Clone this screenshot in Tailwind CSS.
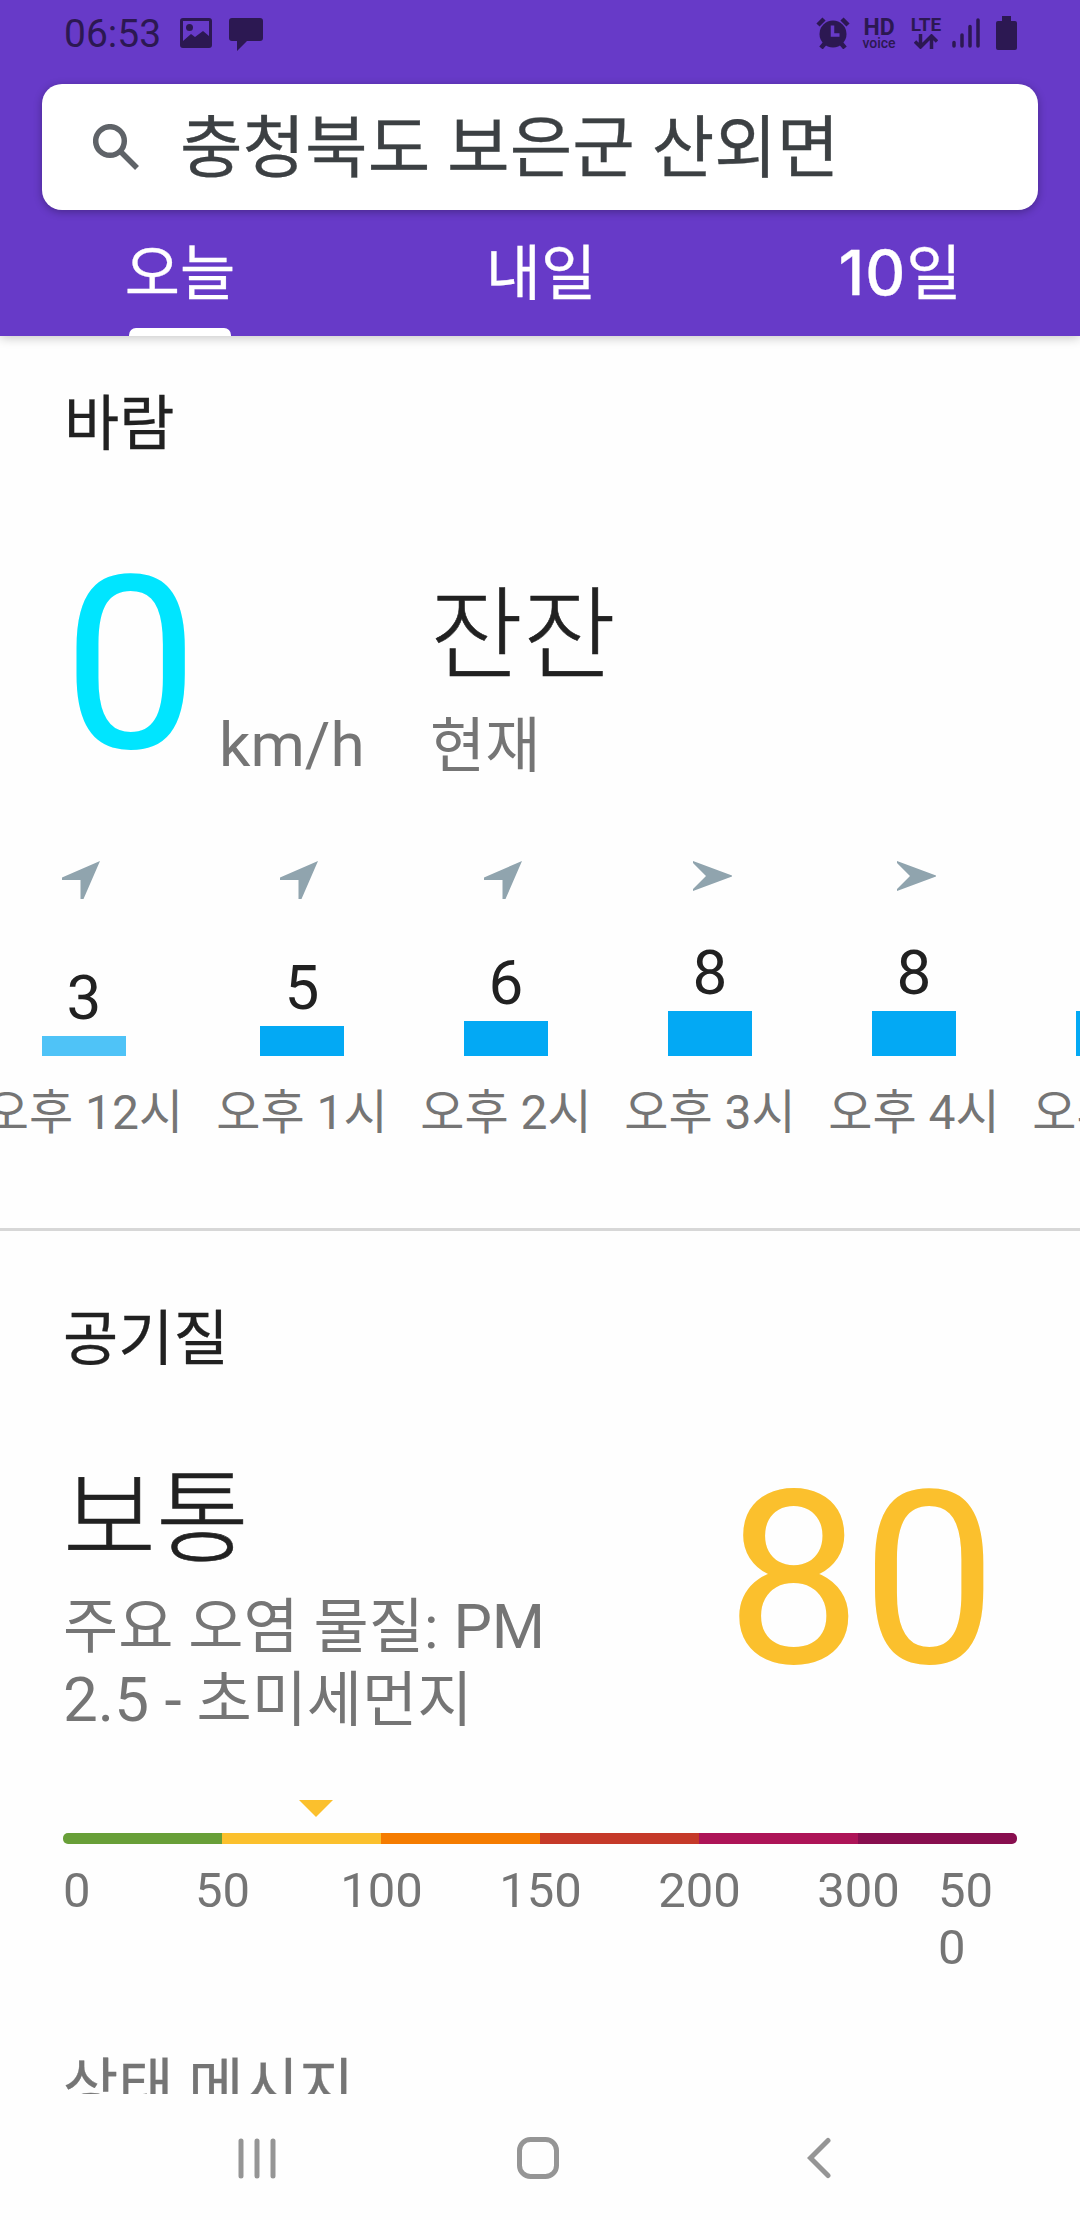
<!DOCTYPE html>
<html lang="ko">
<head>
    <meta charset="UTF-8">
    <meta name="viewport" content="width=device-width, initial-scale=1.0">
    <title>날씨</title>
    <script src="https://cdn.jsdelivr.net/npm/@tailwindcss/browser@4"></script>
</head>
<body class="bg-white">

    <div class="w-[1080px] h-[2220px] overflow-hidden flex flex-col bg-[#fefefe] text-[#212121] text-[60px] leading-[72px] font-['Roboto','Noto_Sans_CJK_KR',sans-serif]">

        <!-- Header -->
        <header class="relative z-10 shrink-0 h-[336px] bg-[#673ac8] flex flex-col shadow-[0_2px_10px_rgba(0,0,0,0.22)]">
            <!-- Status bar -->
            <div class="h-[84px] shrink-0 pl-[64px] pr-[63px] pt-[12px] flex items-start text-[#2c1852]">
                <span class="text-[39px] leading-[44px] w-[116px]">06:53</span>
                <svg class="w-[32px] h-[30px] mt-[6px]" viewBox="0 0 32 30" fill="currentColor">
                    <path fill-rule="evenodd" d="M3 0h26a3 3 0 0 1 3 3v24a3 3 0 0 1-3 3H3a3 3 0 0 1-3-3V3a3 3 0 0 1 3-3zM3 3v20l8-7 4 3 8-6 6 5V3z"/>
                    <circle cx="9.500" cy="9.500" r="3.500"/>
                </svg>
                <svg class="w-[34px] h-[33px] ml-[17px] mt-[6px]" viewBox="0 0 34 33" fill="currentColor">
                    <path d="M3 0h28a3 3 0 0 1 3 3v17a3 3 0 0 1-3 3H18L8 33V23H3a3 3 0 0 1-3-3V3a3 3 0 0 1 3-3z"/>
                </svg>
                <div class="ml-auto flex items-start">
                    <svg class="w-[34px] h-[32px] mt-[5px]" viewBox="0 0 34 32">
                        <path d="M2 8l6-6M32 8l-6-6" stroke="currentColor" stroke-width="4.500"/>
                        <path d="M5 31l5-6M29 31l-5-6" stroke="currentColor" stroke-width="4.500"/>
                        <circle cx="17" cy="17" r="13.500" fill="currentColor"/>
                        <path d="M16.500 8.500v9.500h7" fill="none" stroke="#673ac8" stroke-width="3.500"/>
                    </svg>
                    <div class="ml-[12px] w-[34px] mt-[7px] flex flex-col items-center">
                        <span class="text-[23px] leading-[18px] font-bold">HD</span>
                        <span class="text-[14px] leading-[12px] font-medium">voice</span>
                    </div>
                    <div class="ml-[13px] w-[34px] mt-[4px] flex flex-col items-center">
                        <span class="text-[19px] leading-[18px] font-bold">LTE</span>
                        <svg class="w-[24px] h-[15px]" viewBox="0 0 24 15" fill="none" stroke="currentColor" stroke-width="3.500">
                            <path d="M6.500 0v13M1 7.500l5.500 5.500L12 7.500M17.500 15V2M12 7.500L17.500 2 23 7.500"/>
                        </svg>
                    </div>
                    <svg class="w-[28px] h-[32px] ml-[9px] mt-[5px]" viewBox="0 0 28 32" stroke="currentColor" stroke-width="3.500" stroke-linecap="round">
                        <path d="M2 25.500v3.500M10 18v11M18 9.500v19.500M26 3v26"/>
                    </svg>
                    <svg class="w-[21px] h-[34px] ml-[16px] mt-[4px]" viewBox="0 0 21 34" fill="currentColor">
                        <path d="M6 0h9v5h4a2 2 0 0 1 2 2v25a2 2 0 0 1-2 2H2a2 2 0 0 1-2-2V7a2 2 0 0 1 2-2h4z"/>
                    </svg>
                </div>
            </div>

            <!-- Search box -->
            <div class="mx-[42px] h-[126px] shrink-0 bg-white rounded-[20px] shadow-[0_2px_9px_rgba(0,0,0,0.3)] flex items-center pl-[51px] text-[#3c4043]">
                <svg class="w-[46px] h-[46px]" viewBox="0 0 46 46" fill="none" stroke="#5f6368" stroke-width="5.500">
                    <circle cx="17" cy="17" r="14.300"/>
                    <path d="M27 27l17 17"/>
                </svg>
                <span class="ml-[41px] mt-[3px] text-[68px] leading-[80px] [-webkit-text-stroke:0.3px_#3c4043]">충청북도 보은군 산외면</span>
            </div>

            <!-- Tabs -->
            <nav class="flex-1 grid grid-cols-3 text-white text-center [-webkit-text-stroke:0.3px_white]">
                <div class="flex flex-col items-center">
                    <span class="mt-[29px]">오늘</span>
                    <span class="mt-auto w-[102px] h-[8px] bg-white rounded-t-[7px]"></span>
                </div>
                <div class="pt-[29px] pl-[2px]">내일</div>
                <div class="pt-[29px]"><span class="font-['Inter'] font-medium text-[62px] leading-none tracking-[1px]">10</span>일</div>
            </nav>
        </header>

        <main class="flex-1 min-h-0 overflow-hidden">
            <!-- Wind -->
            <section class="h-[895px] border-b-[3px] border-[#d7d7d7] overflow-hidden">
                <h2 class="ml-[64px] mt-[53px] [-webkit-text-stroke:0.3px_#212121]">바람</h2>
                <div class="mt-[85px] h-[240px] flex pl-[63px]">
                    <span class="w-[156px] text-[241px] leading-[240px] text-[#00e5ff]">0</span>
                    <span class="w-[211px] pt-[163px] text-[62px] text-[#757575]">km/h</span>
                    <div class="flex flex-col">
                        <span class="mt-[41px] text-[101px] leading-[100px] font-light [-webkit-text-stroke:0.6px_#212121]">잔잔</span>
                        <span class="mt-[24px] text-[#757575]">현재</span>
                    </div>
                </div>
                <div id="hours" class="flex mt-[75px] w-[1400px] -ml-[32px]"></div>
            </section>

            <!-- Air quality -->
            <section>
                <h2 class="ml-[63px] mt-[73px] [-webkit-text-stroke:0.3px_#212121]">공기질</h2>
                <div class="flex mt-[85px] h-[280px] pl-[63px]">
                    <div class="w-[663px]">
                        <div class="text-[101px] leading-[100px] mt-[9px] font-light [-webkit-text-stroke:0.6px_#212121]">보통</div>
                        <p class="mt-[21px] text-[#757575]">주요 오염 물질: <span class="text-[61px]">PM</span><br><span class="text-[62px]">2.5 -</span> 초미세먼지</p>
                    </div>
                    <span class="text-[241px] leading-[240px] text-[#fbc02d]">80</span>
                </div>
                <div class="mx-[63px] mt-[59px]">
                    <svg class="block w-[34px] h-[17px] ml-[236px]" viewBox="0 0 34 17" fill="#fbc02d"><path d="M0 0h34L17 17z"/></svg>
                    <div class="mt-[16px] h-[11px] rounded-[5px] overflow-hidden grid grid-cols-6">
                        <span class="bg-[#689f38]"></span>
                        <span class="bg-[#fbc02d]"></span>
                        <span class="bg-[#f57c00]"></span>
                        <span class="bg-[#c53929]"></span>
                        <span class="bg-[#ad1457]"></span>
                        <span class="bg-[#880e4f]"></span>
                    </div>
                    <div class="mt-[18px] flex text-[49px] leading-[57px] text-[#757575] text-center">
                        <span class="w-[80px] text-left">0</span>
                        <span class="w-[159px]">50</span>
                        <span class="w-[159px]">100</span>
                        <span class="w-[159px]">150</span>
                        <span class="w-[159px]">200</span>
                        <span class="w-[159px]">300</span>
                        <span class="w-[79px] text-left">50<br>0</span>
                    </div>
                </div>
                <p class="ml-[63px] mt-[76px] text-[#757575] [-webkit-text-stroke:0.3px_#757575]">상태 메시지</p>
            </section>
        </main>

        <!-- Navigation bar -->
        <footer class="shrink-0 h-[126px] pt-[43px] pl-[237px] flex">
            <svg class="w-[40px] h-[42px]" viewBox="0 0 40 42" stroke="#959595" stroke-width="5" stroke-linecap="round">
                <path d="M4 4v35M20 4v35M36 4v35"/>
            </svg>
            <svg class="w-[42px] h-[42px] ml-[240px]" viewBox="0 0 42 42" fill="none" stroke="#959595" stroke-width="5">
                <rect x="2.500" y="2.500" width="37" height="37" rx="11"/>
            </svg>
            <svg class="w-[24px] h-[42px] ml-[248px]" viewBox="0 0 24 42" fill="none" stroke="#959595" stroke-width="5" stroke-linecap="round">
                <path d="M21 3.500L3.500 21 21 38.500"/>
            </svg>
        </footer>
    </div>

    <script>
        const hours = [
            { speed: 3, label: '오후 12시', east: false },
            { speed: 5, label: '오후 1시', east: false },
            { speed: 6, label: '오후 2시', east: false },
            { speed: 8, label: '오후 3시', east: true },
            { speed: 8, label: '오후 4시', east: true },
            { speed: 8, label: '오후 5시', east: true }
        ];
        // Bar height for each wind speed
        const barHeight = { 3: 20, 5: 30, 6: 35, 8: 45 };
        const arrows = {
            ne: '<path d="M38 0L0 16.500V19H18.500V38H21.500z"/>',
            east: '<path d="M0 0L39 14.500V15.500L0 30V28L13 15 0 2z"/>'
        };

        document.getElementById('hours').innerHTML = hours.map((h, i) => `
            <div class="${i === 0 ? 'w-[232px]' : 'w-[204px]'} shrink-0 flex flex-col items-center">
                <svg class="w-[40px] h-[40px] ${h.east ? 'ml-[5px]' : 'mr-[5px]'}" viewBox="0 0 40 40" fill="#90a4ae">${h.east ? arrows.east : arrows.ne}</svg>
                <div class="h-[155px] flex flex-col justify-end items-center">
                    <span class="mb-[2px] text-[62px]">${h.speed}</span>
                    <div class="w-[84px] ${h.speed === 3 ? 'bg-[#4fc3f7]' : 'bg-[#03a9f4]'}" style="height: ${barHeight[h.speed]}px"></div>
                </div>
                <span class="mt-[27px] text-[48px] leading-[60px] text-[#757575] whitespace-nowrap">${h.label}</span>
            </div>`).join('');
    </script>

</body>
</html>
